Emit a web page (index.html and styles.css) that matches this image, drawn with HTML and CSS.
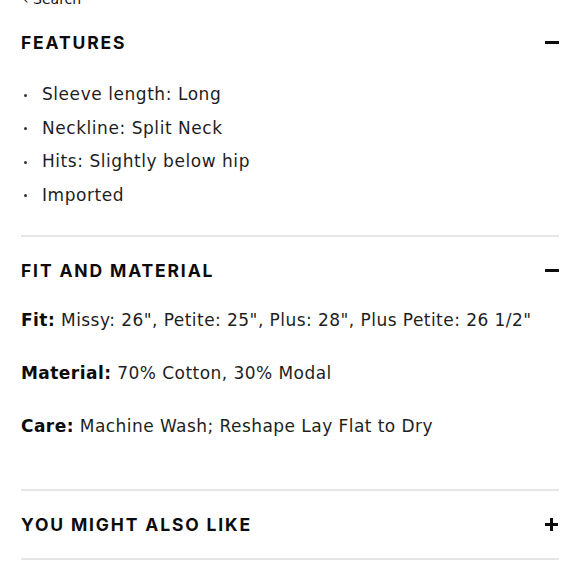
FILE: index.html
```html
<!DOCTYPE html>
<html lang="en">
<head>
<meta charset="utf-8">
<title>Product details</title>
<link rel="stylesheet" href="styles.css">
</head>
<body>
<div class="page">
  <div class="back"><span class="chev">‹</span> Search</div>

  <section class="acc acc-first">
    <div class="acc-head">
      <h2>FEATURES</h2>
      <span class="icon minus"></span>
    </div>
    <ul class="bullets">
      <li>Sleeve length: Long</li>
      <li>Neckline: Split Neck</li>
      <li>Hits: Slightly below hip</li>
      <li>Imported</li>
    </ul>
  </section>

  <section class="acc">
    <div class="acc-head">
      <h2>FIT AND MATERIAL</h2>
      <span class="icon minus"></span>
    </div>
    <div class="specs">
      <p><b>Fit:</b> Missy: 26", Petite: 25", Plus: 28", Plus Petite: 26 1/2"</p>
      <p><b>Material:</b> 70% Cotton, 30% Modal</p>
      <p><b>Care:</b> Machine Wash; Reshape Lay Flat to Dry</p>
    </div>
  </section>

  <section class="acc acc-last">
    <div class="acc-head">
      <h2>YOU MIGHT ALSO LIKE</h2>
      <span class="icon plus"></span>
    </div>
  </section>
</div>
</body>
</html>
```

FILE: styles.css
```css
* { box-sizing: border-box; }

html, body {
  margin: 0;
  padding: 0;
  background: #fff;
}

body {
  font-family: "DejaVu Sans", "Inter", sans-serif;
  color: #1e1e1e;
  overflow: hidden;
}

.page {
  padding: 0 21px;
}

.back {
  margin-top: -10px;
  height: 18px;
  line-height: 18px;
  font-size: 14px;
  color: #111;
  padding-left: 2px;
}

.chev { font-size: 14px; }

.acc {
  border-top: 2px solid #e6e6e6;
}

.acc-first {
  border-top: none;
  margin-top: 1px;
  padding-bottom: 23px;
}

.acc-last {
  border-bottom: 2px solid #e6e6e6;
}

.acc-head {
  height: 67px;
  display: flex;
  align-items: center;
  justify-content: space-between;
}

.acc-head h2 {
  margin: 0;
  font-family: "Inter", "DejaVu Sans", sans-serif;
  font-size: 17.5px;
  font-weight: 700;
  letter-spacing: 1.85px;
  color: #0c0c0c;
}

.icon {
  position: relative;
  width: 14px;
  height: 13px;
}

.icon::before,
.icon::after {
  content: "";
  position: absolute;
  background: #0c0c0c;
}

.minus::before {
  left: 0;
  top: 5px;
  width: 14px;
  height: 3px;
}

.minus::after { display: none; }

.plus::before {
  left: 0;
  top: 5px;
  width: 13px;
  height: 3px;
}

.plus::after {
  left: 5px;
  top: 0;
  width: 3px;
  height: 13px;
}

.bullets {
  list-style: none;
  margin: 2px 0 0;
  padding: 0;
}

.bullets li {
  position: relative;
  padding-left: 21px;
  font-size: 17px;
  line-height: 33.5px;
  letter-spacing: 0.55px;
}

.bullets li::before {
  content: "";
  position: absolute;
  left: 3px;
  top: 15.5px;
  width: 3px;
  height: 3px;
  border-radius: 50%;
  background: #333;
}

.specs {
  padding-top: 4px;
  padding-bottom: 51px;
}

.specs p {
  margin: 0 0 29px;
  font-size: 17px;
  line-height: 24px;
  letter-spacing: 0.45px;
}

.specs p:last-child { margin-bottom: 0; }

.specs b {
  font-weight: 700;
  color: #0c0c0c;
}
```
